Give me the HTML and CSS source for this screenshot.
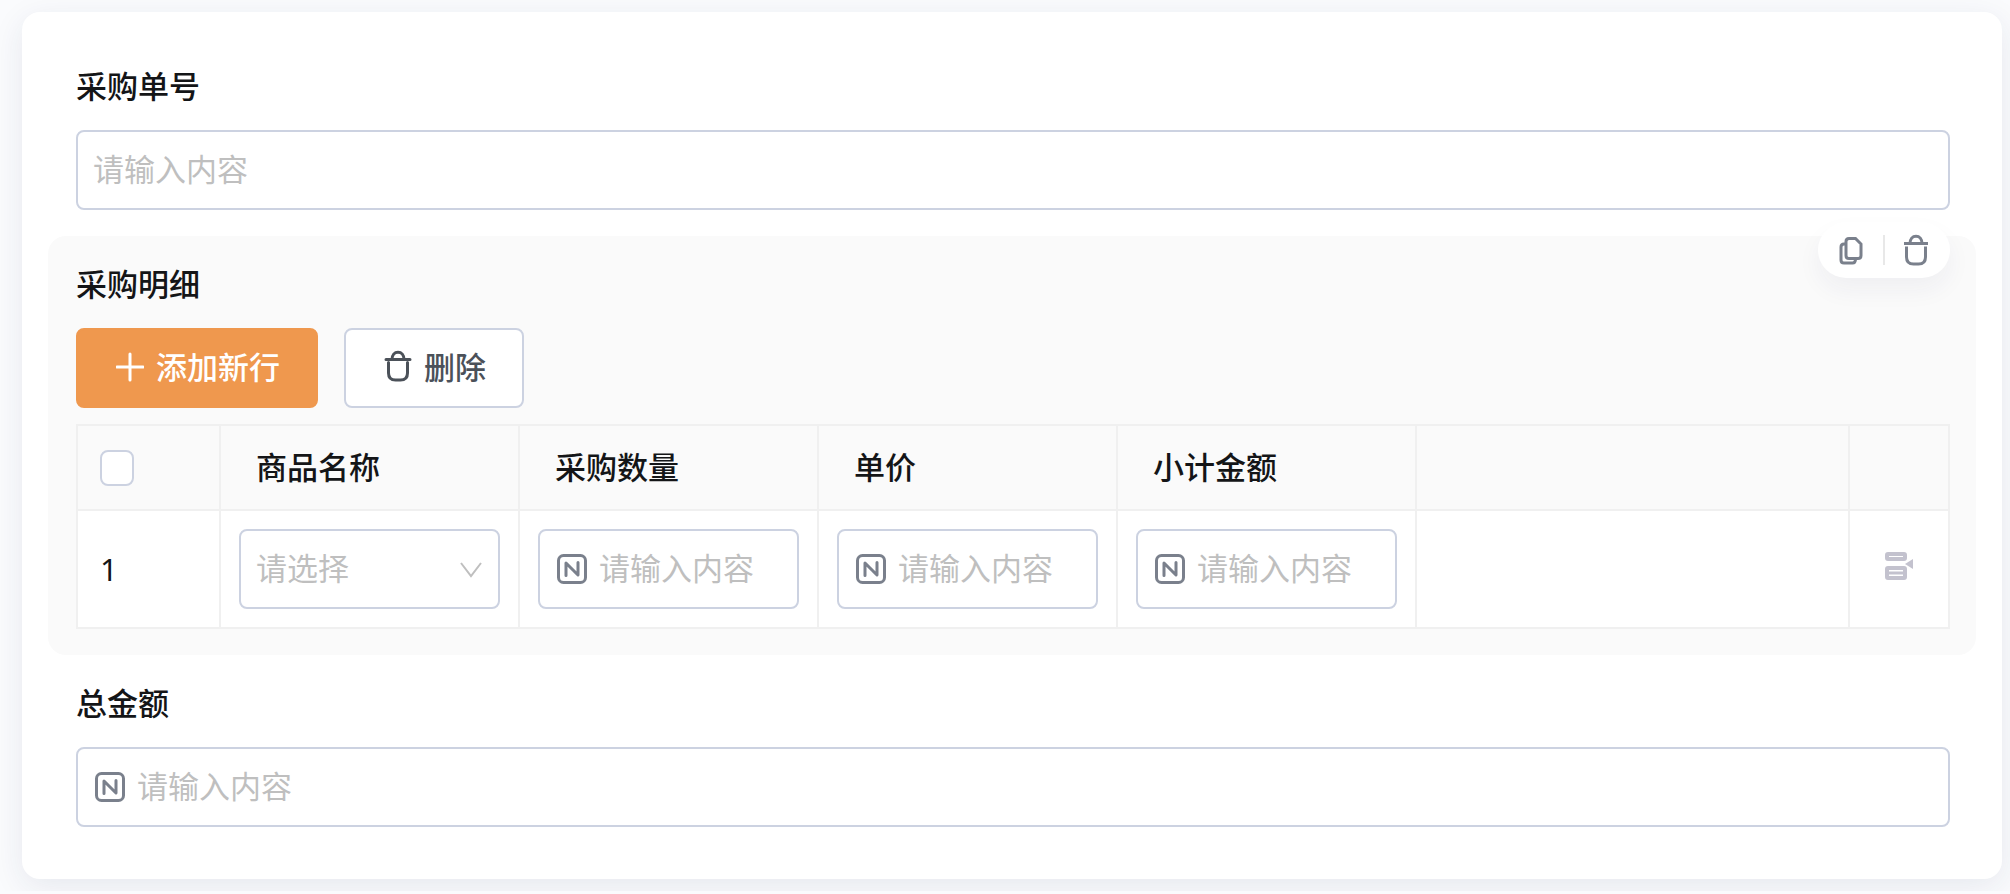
FILE: index.html
```html
<!DOCTYPE html>
<html lang="zh-CN">
<head>
<meta charset="utf-8">
<title>采购单</title>
<link rel="stylesheet" href="styles.css">
</head>
<body>
<svg class="sprite" aria-hidden="true">
  <symbol id="icon-number" viewBox="0 0 32 32"><rect x="2.5" y="2.5" width="27" height="27" rx="5" stroke-width="3"/><path d="M10 22.5V10L22 22V9.500" stroke-width="3" stroke-linecap="round" stroke-linejoin="round"/></symbol>
  <symbol id="icon-trash" viewBox="0 0 28 32"><path d="M2 9.500H26M8 9.500C8 5 10.500 2.200 14 2.200S20 5 20 9.500M4.500 12.500V23Q4.500 30 11.500 30H16.500Q23.500 30 23.500 23V12.500"/></symbol>
  <symbol id="icon-copy" viewBox="0 0 28 32"><path d="M11 4.500H17.500L23 10V21.500Q23 24.500 20 24.500H11Q8 24.500 8 21.500V7.500Q8 4.500 11 4.500ZM8 10H6Q3 10 3 13V26Q3 29 6 29H14.500Q17.500 29 17.500 25"/></symbol>
</svg>
<main class="card">
  <section class="field">
    <label class="label" for="order-no">采购单号</label>
    <div class="control"><input id="order-no" type="text" placeholder="请输入内容"></div>
  </section>

  <section class="field field-active">
    <div class="toolbar">
      <button type="button" aria-label="复制"><svg class="icon-tool"><use href="#icon-copy"/></svg></button>
      <span class="divider"></span>
      <button type="button" aria-label="删除字段"><svg class="icon-tool"><use href="#icon-trash"/></svg></button>
    </div>
    <h2 class="label">采购明细</h2>
    <div class="actions">
      <button type="button" class="button button-primary"><svg class="icon-button" viewBox="0 0 28 32"><path d="M1 17H27M14 4V30"/></svg>添加新行</button>
      <button type="button" class="button"><svg class="icon-button"><use href="#icon-trash"/></svg>删除</button>
    </div>
    <table class="grid">
      <colgroup><col class="col-index"><col class="col-data"><col class="col-data"><col class="col-data"><col class="col-data"><col><col class="col-action"></colgroup>
      <thead>
        <tr>
          <th class="cell-index"><input class="checkbox" type="checkbox" aria-label="全选"></th>
          <th>商品名称</th><th>采购数量</th><th>单价</th><th>小计金额</th><th></th><th></th>
        </tr>
      </thead>
      <tbody>
        <tr>
          <td class="cell-index">1</td>
          <td><div class="control">
            <select aria-label="商品名称"><option>请选择</option></select>
            <svg class="chevron" viewBox="0 0 24 20"><path d="M1 4L11 17L21 4"/></svg>
          </div></td>
          <td><div class="control"><svg class="icon-number"><use href="#icon-number"/></svg><input type="text" aria-label="采购数量" placeholder="请输入内容"></div></td>
          <td><div class="control"><svg class="icon-number"><use href="#icon-number"/></svg><input type="text" aria-label="单价" placeholder="请输入内容"></div></td>
          <td><div class="control"><svg class="icon-number"><use href="#icon-number"/></svg><input type="text" aria-label="小计金额" placeholder="请输入内容"></div></td>
          <td></td>
          <td class="cell-action"><button type="button" aria-label="行操作"><svg class="icon-row" viewBox="0 0 32 32"><rect x="4" y="4" width="18" height="5" rx="1"/><rect x="4" y="18" width="18" height="10" rx="1"/><path d="M4 23H22" stroke-width="3"/><path class="solid" d="M22 14L30 9V19Z"/></svg></button></td>
        </tr>
      </tbody>
    </table>
  </section>

  <section class="field">
    <label class="label" for="total">总金额</label>
    <div class="control"><svg class="icon-number"><use href="#icon-number"/></svg><input id="total" type="text" placeholder="请输入内容"></div>
  </section>
</main>
</body>
</html>
```
FILE: styles.css
```css
* { box-sizing: border-box; }

body {
  margin: 0;
  padding: 12px 8px 12px 22px;
  background: #fafbfd;
  color: #141517;
  font: 400 31px/42px "Noto Sans CJK SC", sans-serif;
}

button, input, select { font: inherit; color: inherit; }
button { padding: 0; border: 0; background: none; }
svg { flex: none; fill: none; stroke: currentColor; }
.sprite { position: absolute; width: 0; height: 0; }

.card {
  padding: 26px;
  border-radius: 18px;
  background: #fff;
  box-shadow: 0 8px 32px rgba(30, 40, 90, 0.09);
}

.field { position: relative; padding: 26px; padding-left: 28px; }
.field-active { border-radius: 18px; background: #fafafa; }

.label { display: block; margin: 0 0 24px; font-size: 31px; font-weight: 500; }

.control {
  display: flex;
  align-items: center;
  gap: 10px;
  height: 80px;
  padding: 0 14px;
  border: 2px solid #ccd2e1;
  border-radius: 8px;
  background: #fff;
}
.control input, .control select {
  flex: 1;
  min-width: 0;
  height: 100%;
  padding: 0 0 4px 1px;
  border: 0;
  outline: 0;
  background: transparent;
}
.control input { padding-bottom: 6px; }
.control select { appearance: none; color: #bfbfbf; }
.control input::placeholder { color: #bfbfbf; opacity: 1; }

.icon-number { width: 32px; height: 32px; margin-left: 2px; color: #7a808c; }
.chevron { width: 24px; height: 20px; color: #bfbfbf; stroke-width: 2; }

.toolbar {
  position: absolute;
  top: -14px;
  right: 26px;
  display: flex;
  align-items: center;
  justify-content: space-between;
  width: 132px;
  height: 56px;
  padding: 0 20px;
  border-radius: 28px;
  background: #fff;
  box-shadow: 0 12px 24px rgba(30, 40, 90, 0.05);
  color: #7a808c;
}
.toolbar button { display: flex; }
.icon-tool { width: 28px; height: 32px; stroke-width: 3; }
.divider { width: 2px; height: 30px; background: #e8e8e8; }

.actions { display: flex; gap: 26px; margin-bottom: 16px; }
.button {
  display: flex;
  align-items: center;
  gap: 12px;
  height: 80px;
  padding: 0 36px 4px 38px;
  border: 2px solid #ccd2e1;
  border-radius: 8px;
  background: #fff;
  color: #4b5159;
  font-weight: 500;
}
.button-primary { border-color: #ef984e; background: #ef984e; color: #fff; }
.icon-button { width: 28px; height: 32px; stroke-width: 3; stroke-linecap: round; }

.grid { width: 100%; border-collapse: collapse; table-layout: fixed; }
.grid th, .grid td { border: 2px solid #f0f0f0; }
.grid th { height: 85px; padding: 0 35px 4px; text-align: left; font-weight: 500; }
.grid td { padding: 18px; background: #fff; }
.grid .cell-index { padding: 0 22px; font-family: "Noto Sans", "Noto Sans CJK SC", sans-serif; }
.grid .cell-action { padding: 0; text-align: center; }
.col-index { width: 143px; }
.col-data { width: 299px; }
.col-action { width: 100px; }

.checkbox {
  display: block;
  appearance: none;
  width: 34px;
  height: 36px;
  margin: 0;
  border: 2px solid #ccd2e1;
  border-radius: 8px;
  background: #fff;
}
.cell-action button { display: inline-flex; }
.icon-row { width: 32px; height: 32px; color: #c3c2ce; stroke-width: 4; }
.solid { fill: currentColor; stroke: none; }
```
